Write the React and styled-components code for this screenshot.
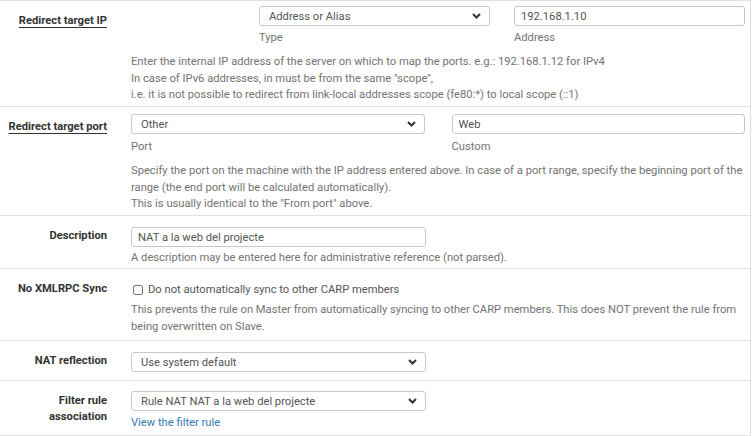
import styled, { createGlobalStyle } from "styled-components";

const GlobalStyle = createGlobalStyle`
  html, body {
    margin: 0;
    padding: 0;
    background: #fff;
  }
  body {
    font-family: Roboto, "Liberation Sans", sans-serif;
    font-size: 11.2px;
    color: #333;
  }
`;

function Chevron() {
  return (
    <svg width="9" height="6" viewBox="0 0 9 6">
      <path d="M1 1 L4.5 4.5 L8 1" fill="none" stroke="#333" strokeWidth="2" />
    </svg>
  );
}

function Select({ value }) {
  return (
    <SelectBox>
      <span>{value}</span>
      <Chevron />
    </SelectBox>
  );
}

function App() {
  return (
    <>
      <GlobalStyle />
      <Panel>
        <Row>
          <Label $underline>Redirect target IP</Label>
          <Content $pt={5} $pb={2.5}>
            <IpGrid>
              <span />
              <Field>
                <Select value="Address or Alias" />
                <Caption>Type</Caption>
              </Field>
              <Field>
                <Input>192.168.1.10</Input>
                <Caption>Address</Caption>
              </Field>
            </IpGrid>
            <Help $mt={8}>
              Enter the internal IP address of the server on which to map the ports. e.g.: 192.168.1.12 for IPv4
              <br />
              In case of IPv6 addresses, in must be from the same "scope",
              <br />
              i.e. it is not possible to redirect from link-local addresses scope (fe80:*) to local scope (::1)
            </Help>
          </Content>
        </Row>

        <Row>
          <Label $underline>Redirect target port</Label>
          <Content $pt={7} $pb={2.5}>
            <PortGrid>
              <Field>
                <Select value="Other" />
                <Caption $mt={5}>Port</Caption>
              </Field>
              <Field>
                <Input>Web</Input>
                <Caption $mt={5}>Custom</Caption>
              </Field>
            </PortGrid>
            <Help $mt={8}>
              Specify the port on the machine with the IP address entered above. In case of a port range, specify the beginning port of the
              range (the end port will be calculated automatically).
              <br />
              This is usually identical to the "From port" above.
            </Help>
          </Content>
        </Row>

        <Row>
          <Label>Description</Label>
          <Content $pt={11} $pb={1.5}>
            <Narrow>
              <Input>NAT a la web del projecte</Input>
            </Narrow>
            <Help $mt={3}>A description may be entered here for administrative reference (not parsed).</Help>
          </Content>
        </Row>

        <Row>
          <Label>No XMLRPC Sync</Label>
          <Content $pt={13} $pb={5}>
            <CheckLine>
              <Checkbox />
              Do not automatically sync to other CARP members
            </CheckLine>
            <Help $mt={4}>
              This prevents the rule on Master from automatically syncing to other CARP members. This does NOT prevent the rule from
              being overwritten on Slave.
            </Help>
          </Content>
        </Row>

        <Row>
          <Label>NAT reflection</Label>
          <Content $pt={11} $pb={8}>
            <Narrow>
              <Select value="Use system default" />
            </Narrow>
          </Content>
        </Row>

        <Row $last>
          <Label>
            Filter rule
            <br />
            association
          </Label>
          <Content $pt={10} $pb={4}>
            <Narrow>
              <Select value="Rule NAT NAT a la web del projecte" />
            </Narrow>
            <Link href="#">View the filter rule</Link>
          </Content>
        </Row>
      </Panel>
    </>
  );
}

const Panel = styled.div`
  width: 750px;
  border-right: 1px solid #dcdcdc;
  background: #fff;
`;

const Row = styled.div`
  display: grid;
  grid-template-columns: 107px 1fr;
  column-gap: 24px;
  padding-right: 5px;
  border-top: 1px solid #e2e2e2;
  ${(p) => p.$last && "border-bottom: 1px solid #e2e2e2;"}
`;

const Label = styled.div`
  padding-top: 12px;
  text-align: right;
  font-weight: 700;
  line-height: 16px;
  color: #333;
  ${(p) =>
    p.$underline &&
    `
    text-decoration: underline;
    text-decoration-thickness: 1px;
    text-underline-offset: 3px;
  `}
`;

const Content = styled.div`
  padding-top: ${(p) => p.$pt || 0}px;
  padding-bottom: ${(p) => p.$pb || 0}px;
  min-width: 0;
`;

const IpGrid = styled.div`
  display: grid;
  grid-template-columns: 104px 1fr 1fr;
  column-gap: 24px;
`;

const PortGrid = styled.div`
  display: grid;
  grid-template-columns: 1fr 1fr;
  column-gap: 27px;
`;

const Field = styled.div`
  display: flex;
  flex-direction: column;
`;

const Narrow = styled.div`
  width: 295px;
`;

const SelectBox = styled.div`
  box-sizing: border-box;
  height: 20px;
  border: 1px solid #c8c8c8;
  border-radius: 3px;
  display: flex;
  align-items: center;
  justify-content: space-between;
  padding: 0 8px 0 9px;
  color: #555;
  background: #fff;
`;

const Input = styled.div`
  box-sizing: border-box;
  height: 20px;
  border: 1px solid #c8c8c8;
  border-radius: 3px;
  display: flex;
  align-items: center;
  padding: 0 6px;
  color: #555;
  background: #fff;
`;

const Caption = styled.div`
  margin-top: ${(p) => (p.$mt != null ? p.$mt : 4)}px;
  line-height: 16px;
  color: #737373;
`;

const Help = styled.div`
  margin-top: ${(p) => p.$mt || 0}px;
  line-height: 16.5px;
  color: #737373;
`;

const CheckLine = styled.div`
  display: flex;
  align-items: center;
  gap: 5px;
  line-height: 16px;
  color: #555;
  padding-left: 2px;
`;

const Checkbox = styled.span`
  box-sizing: border-box;
  width: 10px;
  height: 10px;
  border: 1px solid #767676;
  border-radius: 2px;
  background: #fff;
`;

const Link = styled.a`
  display: block;
  margin-top: 4px;
  line-height: 16px;
  color: #3679b5;
  text-decoration: none;
`;

export default App;
